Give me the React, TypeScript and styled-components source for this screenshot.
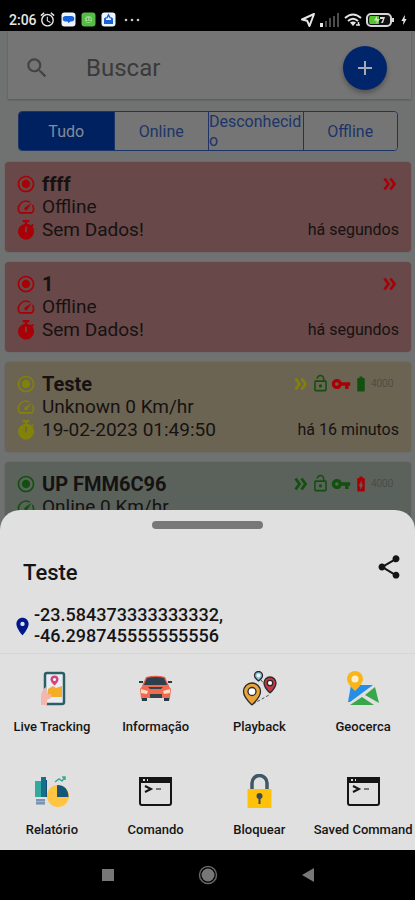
import React from "react";
import styled, { createGlobalStyle } from "styled-components";
import {
  MdAdd,
  MdAlarm,
  MdBatteryChargingFull,
  MdBatteryFull,
  MdBolt,
  MdLocationOn,
  MdLockOpen,
  MdRadioButtonChecked,
  MdSearch,
  MdShare,
  MdSpeed,
  MdVpnKey,
} from "react-icons/md";

const GlobalStyle = createGlobalStyle`
  * { box-sizing: border-box; }
  body { margin: 0; background: #000; font-family: Roboto, "Noto Sans", sans-serif; }
  button, input { font: inherit; }
  button { padding: 0; border: 0; background: none; color: inherit; cursor: pointer; }
  h1, h2, p { margin: 0; }
  svg { display: block; flex: none; }
`;

const Screen = styled.div`
  display: flex;
  flex-direction: column;
  height: 100vh;
  overflow: hidden;
`;

const StatusBar = styled.header`
  display: flex;
  align-items: center;
  justify-content: space-between;
  height: 31px;
  flex: none;
  padding: 8px 5px 0 9px;
  background: #000;
  color: #e6e6e6;
  font-size: 14px;
  font-weight: 500;
`;

const StatusGroup = styled.div<{ $gap: number }>`
  display: flex;
  align-items: center;
  gap: ${(p) => p.$gap}px;
`;

const Body = styled.main`
  position: relative;
  flex: 1;
  overflow: hidden;
  background: #707271;
`;

const SearchCard = styled.form`
  display: flex;
  align-items: center;
  margin: 0 4px 0 8px;
  height: 68px;
  padding: 6px 24px 0 16px;
  background: #757575;
  box-shadow: 0 1px 2px rgba(0, 0, 0, 0.25);
  color: #434343;
`;

const SearchInput = styled.input`
  flex: 1;
  min-width: 0;
  margin-left: 36px;
  padding: 0;
  border: 0;
  outline: 0;
  background: none;
  color: #303030;
  font-size: 24px;
  &::placeholder { color: #3a3a3a; opacity: 1; }
`;

const AddButton = styled.button`
  display: grid;
  place-items: center;
  width: 44px;
  height: 44px;
  border-radius: 50%;
  background: #00256b;
  color: #a5aab5;
  box-shadow: 0 3px 5px rgba(0, 0, 0, 0.3);
`;

const Segments = styled.div`
  display: grid;
  grid-template-columns: repeat(4, 1fr);
  margin: 12px 17px 0 18px;
  height: 40px;
  border: 1px solid #1d3468;
  border-radius: 4px;
  overflow: hidden;
`;

const Segment = styled.button<{ $active?: boolean; $wrapped?: boolean }>`
  min-width: 0;
  overflow-wrap: anywhere;
  background: ${(p) => (p.$active ? "#00215f" : "#757575")};
  color: ${(p) => (p.$active ? "#858b98" : "#1d3468")};
  font-size: 16px;
  line-height: 19px;
  text-align: ${(p) => (p.$wrapped ? "left" : "center")};
  & + & { border-left: 1px solid #1d3468; }
`;

const CardList = styled.ul`
  display: flex;
  flex-direction: column;
  gap: 10px;
  margin: 0;
  padding: 11px 4px 0 5px;
  list-style: none;
`;

const Card = styled.li<{ $bg: string }>`
  display: flex;
  flex-direction: column;
  height: 90px;
  padding: 10px 12px 0 11px;
  border-radius: 4px;
  background: ${(p) => p.$bg};
  box-shadow: 0 0 2px rgba(0, 0, 0, 0.15);
  color: #161212;
`;

const CardLine = styled.div<{ $color: string }>`
  display: flex;
  align-items: center;
  height: 23px;
  font-size: 19px;
  white-space: nowrap;
  & > svg { color: ${(p) => p.$color}; margin-right: 6px; }
`;

const VehicleName = styled.h2`
  flex: 1;
  font-size: 20px;
  font-weight: 700;
`;

const LineText = styled.span`
  flex: 1;
`;

const Ago = styled.span`
  font-size: 16px;
`;

const Indicators = styled.div`
  display: flex;
  align-items: center;
  gap: 1px;
`;

const Voltage = styled.span`
  width: 28px;
  color: #42413e;
  font-size: 10px;
  font-weight: 300;
`;

const Sheet = styled.section`
  position: absolute;
  right: 0;
  bottom: 0;
  left: 0;
  display: flex;
  flex-direction: column;
  height: 340px;
  border-radius: 20px 20px 0 0;
  background: #e0e0e1;
  color: #151515;
`;

const Handle = styled.span`
  align-self: center;
  width: 111px;
  height: 8px;
  margin-top: 11px;
  border-radius: 4px;
  background: #777;
`;

const SheetHeader = styled.div`
  display: flex;
  align-items: center;
  justify-content: space-between;
  height: 72px;
  padding: 4px 12px 0 23px;
`;

const SheetTitle = styled.h1`
  padding-top: 12px;
  font-size: 22px;
  font-weight: 500;
`;

const Position = styled.div`
  display: flex;
  align-items: center;
  gap: 1px;
  height: 54px;
  padding: 0 12px;
  margin-bottom: 2px;
  border-bottom: 1px solid #d6d6d7;
  font-size: 18px;
  font-weight: 500;
  line-height: 21px;
`;

const Coordinates = styled.p`
  width: 192px;
  margin-bottom: 4px;
`;

const Actions = styled.div`
  display: grid;
  grid-template-columns: repeat(4, 1fr);
  grid-template-rows: 103px 91px;
`;

const Action = styled.button`
  display: flex;
  flex-direction: column;
  align-items: center;
  gap: 11px;
  padding-top: 15px;
  font-size: 13px;
  font-weight: 500;
  line-height: 20px;
  white-space: nowrap;
`;

const NavBar = styled.nav`
  display: flex;
  align-items: center;
  justify-content: center;
  gap: 81px;
  height: 50px;
  flex: none;
  background: #000;
`;

const Chevrons = ({ color }: { color: string }) => (
  <svg width="18" height="18" viewBox="0 0 18 18" fill="none" stroke={color} strokeWidth="2.700">
    <path d="M3.500 3.500 7.500 9l-4 5.500M9.500 3.500l4 5.500-4 5.500" />
  </svg>
);

const Stopwatch = () => (
  <svg width="20" height="20" viewBox="0 0 18 18" fill="currentColor">
    <path d="M6 0h6v2h-2v1.300a7 7 0 0 1 3.500 1.500l1.300-1.300 1.300 1.300-1.300 1.300A7.200 7.200 0 1 1 8 3.300V2H6zM8.200 6v5h1.600V6z" fillRule="evenodd" />
  </svg>
);

const ChatApp = () => (
  <svg width="15" height="15" viewBox="0 0 15 15">
    <rect x=".5" y=".5" width="14" height="14" rx="3" fill="#eef4fb" />
    <path d="M4.500 4h6a2.500 2.500 0 0 1 0 5.500H9.500L7.500 11l-1-1.500h-2A2.700 2.700 0 0 1 4.500 4" fill="#1762d6" />
  </svg>
);

const GreenApp = () => (
  <svg width="15" height="15" viewBox="0 0 15 15">
    <rect x=".5" y=".5" width="14" height="14" rx="3" fill="#55bd45" />
    <circle cx="7.500" cy="7.500" r="3.500" fill="#93d887" />
    <path d="M6.500 6v2M9 6v2M5.500 9.500h4" stroke="#4aa83d" />
  </svg>
);

const MailApp = () => (
  <svg width="15" height="15" viewBox="0 0 15 15">
    <rect x=".5" y=".5" width="14" height="14" rx="3" fill="#eef4fb" />
    <path d="M3 6.500 5 5v3h5V5l2 1.500V12H3z" fill="#1762d6" />
    <path d="M5.500 6.500 7.500 3l2 3.500" fill="none" stroke="#1762d6" strokeWidth="1.500" />
  </svg>
);

const Dots = () => (
  <svg width="22" height="16" viewBox="0 0 22 16" fill="#c8c8c8">
    <circle cx="5" cy="8" r="1.300" />
    <circle cx="11" cy="8" r="1.300" />
    <circle cx="17" cy="8" r="1.300" />
  </svg>
);

const LocationArrow = () => (
  <svg width="16" height="16" viewBox="0 0 16 16" fill="none" stroke="#e6e6e6" strokeWidth="2" strokeLinejoin="round">
    <path d="M14 2 2 7.500l5.200 1.300L9.500 14z" />
  </svg>
);

const Signal = () => (
  <svg width="20" height="14" viewBox="0 0 20 14" fill="#4c4c4c">
    <rect y="10" width="3" height="4" fill="#e6e6e6" />
    <rect x="5" y="8" width="2" height="6" />
    <rect x="9" y="5" width="2" height="9" />
    <rect x="13" y="3" width="2" height="11" />
    <rect x="17" width="2" height="14" />
  </svg>
);

const Wifi = () => (
  <svg width="18" height="14" viewBox="0 0 18 14" fill="none" stroke="#e6e6e6" strokeWidth="2">
    <path d="M1 5q8-7 16 0M4 8q5-4.500 10 0" />
    <path d="M9 13 6 9.500q3-2 6 0z" fill="#e6e6e6" stroke="none" />
    <path d="M12 12h4M14.500 9v3" strokeWidth="1.500" />
  </svg>
);

const Battery = () => (
  <svg width="28" height="14" viewBox="0 0 28 14">
    <rect x="1" y="1" width="24" height="12" rx="4" fill="#111" stroke="#d8d8d8" strokeWidth="2" />
    <path d="M4 3h9v8H4q-1-1-1-4t1-4" fill="#55c72c" />
    <path d="m11 3-3 4.500h3L10 11l4-5h-3zM14 4h5l-2 6h-2l2-4h-3z" fill="#ddd" />
    <rect x="26" y="5" width="2" height="4" fill="#d8d8d8" />
  </svg>
);

const LiveTrackingIcon = () => (
  <svg width="35" height="35" viewBox="-3 0 35 35">
    <rect x="8" y="2" width="19" height="31" rx="2" fill="#e8edf5" stroke="#2b5f63" strokeWidth="2.500" />
    <path d="M11 18l5-3 3 2 6-2v11H10z" fill="#f5ac29" />
    <path d="M17.500 14.500s-4-3.500-4-6a4 4 0 0 1 8 0c0 2.500-4 6-4 6" fill="#d4457c" />
    <circle cx="17.500" cy="8.500" r="1.500" fill="#fff" />
    <path d="M4 34v-9c0-3 2-7 5-9l1 8 4-1v4l-4 2v5z" fill="#f5b7ab" />
  </svg>
);

const CarIcon = () => (
  <svg width="35" height="35" viewBox="0 0 35 35">
    <path d="M3 24h6v6H4zM26 24h6l-1 6h-5z" fill="#263b46" />
    <path d="M8 6q10-2.500 19 0l4 9H4z" fill="#e95b43" />
    <path d="M9 7q9-2 17 0l3 7H6z" fill="#2c414d" />
    <path d="M5 14h25l3 4-1 9H3l-1-9z" fill="#f06b4f" />
    <path d="m3 18 7 2-1 3-6-1zm29 0-7 2 1 3 6-1z" fill="#ffd8ca" />
    <path d="M10 16h15l-2 2H12zM12 23h12v4H12z" fill="#37434b" />
    <path d="M1 10h4v2H1zm29 0h4v2h-4z" fill="#263b46" />
  </svg>
);

const PlaybackIcon = () => (
  <svg width="35" height="35" viewBox="0 0 35 35" stroke="#29282c" strokeWidth="1.300">
    <path d="m19 9 4 5M11 33l16-9" fill="none" strokeWidth=".8" strokeDasharray="3 2" />
    <path d="M16.500 10s-4-3-4-5.500a4 4 0 0 1 8 0c0 2.500-4 5.500-4 5.500" fill="#81bdcd" />
    <circle cx="16.500" cy="4.500" r="2" fill="#e8f7fa" stroke="none" />
    <path d="M28 22s-6-5.500-6-10a6 6 0 0 1 12 0C34 16.500 28 22 28 22" fill="#bd3943" />
    <circle cx="28" cy="12" r="2.700" fill="#fff" />
    <path d="M10 34s-8.500-8-8.500-13.500a8.500 8.500 0 0 1 17 0C18.500 26 10 34 10 34" fill="#e7a43a" />
    <circle cx="10" cy="20.500" r="4" fill="#fff" />
  </svg>
);

const GeofenceIcon = () => (
  <svg width="35" height="35" viewBox="0 0 35 35">
    <path d="M5 14h22L4 31H2z" fill="#258fe7" />
    <path d="m29 16 4 16-14-8zM16 26l12 8H4z" fill="#37a84a" />
    <path d="M9 20S1 13 1 8a8 8 0 0 1 16 0c0 5-8 12-8 12" fill="#f9b51b" />
    <circle cx="9" cy="8" r="3.500" fill="#fff1ce" />
  </svg>
);

const ReportIcon = () => (
  <svg width="35" height="35" viewBox="0 0 35 35">
    <path d="M1 7h6v16H1z" fill="#32a9a1" />
    <path d="M7 3h5v20H7z" fill="#17708a" />
    <path d="M12 6h1v17h-1z" fill="#174d73" />
    <path d="M2 25h9v6H2z" fill="#9eb4c9" />
    <path d="M2 26h9M2 29h9" stroke="#557593" />
    <circle cx="24" cy="22" r="11" fill="#ffc542" />
    <path d="M23 11q11 0 11.500 12H23z" fill="#145779" />
    <path d="m21 8 4-3 3 2 3-4M28 3h3v3" fill="none" stroke="#39aa94" strokeWidth="1.500" />
  </svg>
);

const TerminalIcon = () => (
  <svg width="35" height="35" viewBox="0 0 35 35">
    <rect x="2" y="4" width="31" height="27" rx="2" fill="none" stroke="#151515" strokeWidth="2" />
    <path d="M1 3h33v6H1z" fill="#151515" />
    <path d="M5 5h2v2H5zm4 0h1v2H9z" fill="#ddd" />
    <path d="m7 12 6 3-6 3" fill="none" stroke="#151515" strokeWidth="2" />
    <path d="M18 15h5" stroke="#777" strokeWidth="2" />
  </svg>
);

const PadlockIcon = () => (
  <svg width="35" height="35" viewBox="0 0 35 35">
    <path d="M10 16V9a7.500 7.500 0 0 1 15 0v7" fill="none" stroke="#405765" strokeWidth="3.500" />
    <rect x="5.500" y="15" width="24" height="19" rx="1" fill="#ffc109" />
    <circle cx="17.500" cy="22" r="3" fill="#3b4b52" />
    <path d="M16.500 23h2v7h-2z" fill="#3b4b52" />
  </svg>
);

const RED = "#a80006";
const YELLOW = "#828108";
const GREEN = "#12500f";

const vehicles = [
  { name: "ffff", status: "Offline", time: "Sem Dados!", ago: "há segundos", bg: "#684848", color: RED },
  { name: "1", status: "Offline", time: "Sem Dados!", ago: "há segundos", bg: "#684848", color: RED },
  { name: "Teste", status: "Unknown 0 Km/hr", time: "19-02-2023 01:49:50", ago: "há 16 minutos", bg: "#6b6452", color: YELLOW, keyColor: RED, batteryColor: GREEN },
  { name: "UP FMM6C96", status: "Online 0 Km/hr", time: "19-02-2023 02:06:10", ago: "há segundos", bg: "#5a625b", color: GREEN, keyColor: GREEN, batteryColor: RED, charging: true },
];

const filters = ["Tudo", "Online", "Desconhecido", "Offline"];

const actions = [
  { label: "Live Tracking", Icon: LiveTrackingIcon },
  { label: "Informação", Icon: CarIcon },
  { label: "Playback", Icon: PlaybackIcon },
  { label: "Geocerca", Icon: GeofenceIcon },
  { label: "Relatório", Icon: ReportIcon },
  { label: "Comando", Icon: TerminalIcon },
  { label: "Bloquear", Icon: PadlockIcon },
  { label: "Saved Command", Icon: TerminalIcon },
];

export default function App() {
  return (
    <Screen>
      <GlobalStyle />
      <StatusBar>
        <StatusGroup $gap={2}>
          <span>2:06</span>
          <StatusGroup $gap={5}>
            <MdAlarm size={17} />
            <ChatApp />
            <GreenApp />
            <MailApp />
            <Dots />
          </StatusGroup>
        </StatusGroup>
        <StatusGroup $gap={4}>
          <LocationArrow />
          <Signal />
          <Wifi />
          <Battery />
          <MdBolt size={12} />
        </StatusGroup>
      </StatusBar>
      <Body>
        <SearchCard onSubmit={(e) => e.preventDefault()}>
          <MdSearch size={26} />
          <SearchInput type="search" placeholder="Buscar" aria-label="Buscar" />
          <AddButton type="button" aria-label="Adicionar">
            <MdAdd size={24} />
          </AddButton>
        </SearchCard>
        <Segments>
          {filters.map((f, i) => (
            <Segment key={f} type="button" $active={i === 0} $wrapped={f.length > 10}>{f}</Segment>
          ))}
        </Segments>
        <CardList>
          {vehicles.map((v) => (
            <Card key={v.name} $bg={v.bg}>
              <CardLine $color={v.color}>
                <MdRadioButtonChecked size={20} />
                <VehicleName>{v.name}</VehicleName>
                <Indicators>
                  <Chevrons color={v.color} />
                  {v.keyColor && (
                    <>
                      <MdLockOpen size={19} color={GREEN} />
                      <MdVpnKey size={20} color={v.keyColor} />
                      {v.charging ? (
                        <MdBatteryChargingFull size={18} color={v.batteryColor} />
                      ) : (
                        <MdBatteryFull size={18} color={v.batteryColor} />
                      )}
                      <Voltage>4000</Voltage>
                    </>
                  )}
                </Indicators>
              </CardLine>
              <CardLine $color={v.color}>
                <MdSpeed size={20} />
                <LineText>{v.status}</LineText>
              </CardLine>
              <CardLine $color={v.color}>
                <Stopwatch />
                <LineText>{v.time}</LineText>
                <Ago>{v.ago}</Ago>
              </CardLine>
            </Card>
          ))}
        </CardList>
        <Sheet>
          <Handle />
          <SheetHeader>
            <SheetTitle>Teste</SheetTitle>
            <button type="button" aria-label="Compartilhar">
              <MdShare size={28} />
            </button>
          </SheetHeader>
          <Position>
            <MdLocationOn size={21} color="#00188c" />
            <Coordinates>-23.584373333333332, -46.298745555555556</Coordinates>
          </Position>
          <Actions>
            {actions.map(({ label, Icon }) => (
              <Action key={label} type="button">
                <Icon />
                {label}
              </Action>
            ))}
          </Actions>
        </Sheet>
      </Body>
      <NavBar>
        <button type="button" aria-label="Recentes">
          <svg width="18" height="18" viewBox="0 0 18 18" fill="#777">
            <rect x="3" y="3" width="12" height="12" />
          </svg>
        </button>
        <button type="button" aria-label="Início">
          <svg width="20" height="20" viewBox="0 0 20 20">
            <circle cx="10" cy="10" r="8.500" fill="none" stroke="#666" strokeWidth="1.500" />
            <circle cx="10" cy="10" r="6.500" fill="#777" />
          </svg>
        </button>
        <button type="button" aria-label="Voltar">
          <svg width="18" height="18" viewBox="0 0 18 18" fill="#777">
            <path d="M3 9 15 2v14z" />
          </svg>
        </button>
      </NavBar>
    </Screen>
  );
}
